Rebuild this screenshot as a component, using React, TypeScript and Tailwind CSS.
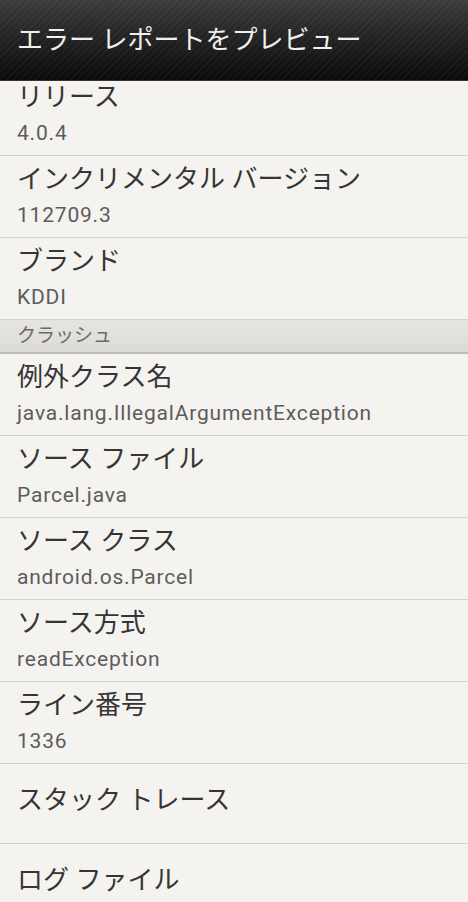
import React from "react";

const jp = "font-['Roboto','Noto_Sans_CJK_JP',sans-serif]";

function Row({
  title,
  value,
  first,
}: {
  title: string;
  value: string;
  first?: boolean;
}) {
  return (
    <div
      className={`flex flex-col border-b border-[#d6d3ce] px-[17px] ${
        first ? "h-[75px] pt-[1px]" : "h-[82px] pt-[8px]"
      }`}
    >
      <div className={`${jp} text-[26px] leading-[30px] text-[#353535]`}>{title}</div>
      <div className={`${jp} mt-[8px] text-[21px] leading-[26px] tracking-[0.8px] text-[#5c5c5c]`}>
        {value}
      </div>
    </div>
  );
}

function SingleRow({ title, border }: { title: string; border?: boolean }) {
  return (
    <div
      className={`flex h-[80px] items-start px-[17px] pt-[21px] ${
        border ? "border-b border-[#d6d3ce]" : ""
      }`}
    >
      <div className={`${jp} text-[26px] leading-[30px] text-[#353535]`}>{title}</div>
    </div>
  );
}

export default function App() {
  return (
    <div className="h-[902px] w-[468px] overflow-hidden bg-[#f5f3ef]">
      <div className="flex h-[81px] items-center border-b border-[#3a322a] bg-[repeating-linear-gradient(135deg,rgba(255,255,255,0.03)_0px,rgba(255,255,255,0.03)_2px,rgba(0,0,0,0)_2px,rgba(0,0,0,0)_5px),linear-gradient(180deg,#3c3c3c_0%,#262626_40%,#0a0a0a_100%)] px-[17px]">
        <div className={`${jp} text-[26px] leading-[30px] text-[#f0f0f0]`}>
          エラー レポートをプレビュー
        </div>
      </div>
      <Row first title="リリース" value="4.0.4" />
      <Row title="インクリメンタル バージョン" value="112709.3" />
      <Row title="ブランド" value="KDDI" />
      <div className="flex h-[34px] items-center border-b-2 border-[#bdbbb6] bg-[linear-gradient(180deg,#e6e5e0_0%,#dcdbd6_100%)] px-[17px]">
        <div className={`${jp} text-[19px] leading-[22px] text-[#6a6a6a]`}>クラッシュ</div>
      </div>
      <Row title="例外クラス名" value="java.lang.IllegalArgumentException" />
      <Row title="ソース ファイル" value="Parcel.java" />
      <Row title="ソース クラス" value="android.os.Parcel" />
      <Row title="ソース方式" value="readException" />
      <Row title="ライン番号" value="1336" />
      <SingleRow border title="スタック トレース" />
      <SingleRow title="ログ ファイル" />
    </div>
  );
}
